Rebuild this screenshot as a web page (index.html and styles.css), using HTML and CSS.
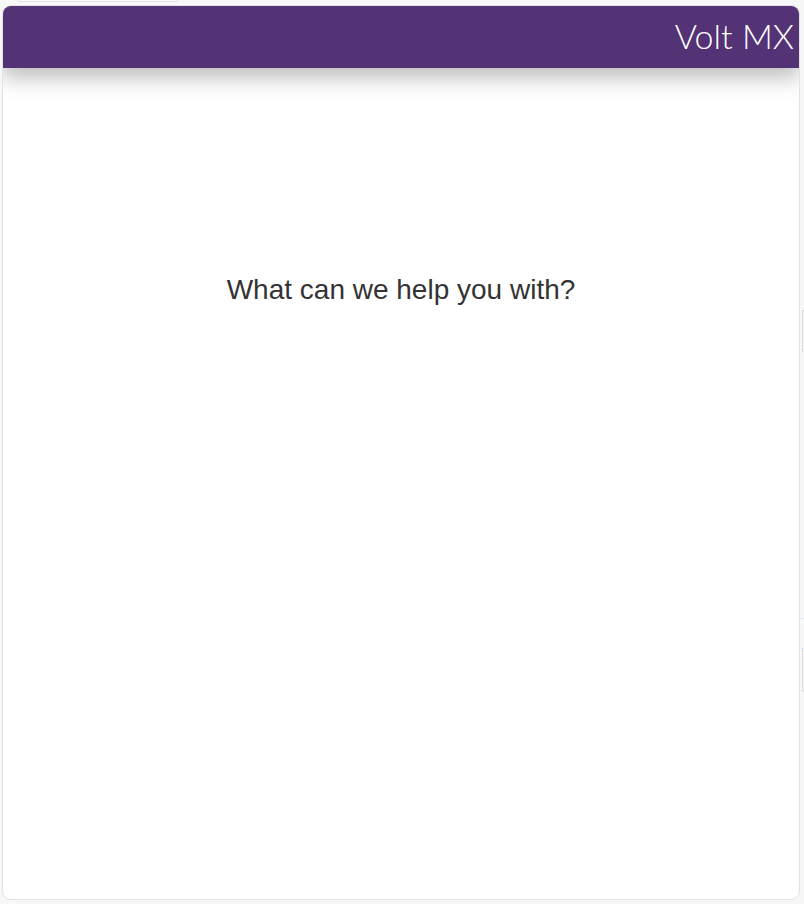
FILE: index.html
```html
<!DOCTYPE html>
<html lang="en">
<head>
<meta charset="utf-8">
<title>Volt MX</title>
<link rel="stylesheet" href="styles.css">
</head>
<body>
<div class="backdrop">
  <div class="tab-edge"></div>
  <div class="side-box side-box-1"></div>
  <div class="side-line side-line-1"></div>
  <div class="side-box side-box-2"></div>
</div>
<div class="card">
  <header class="card-header">
    <span class="brand">Volt MX</span>
  </header>
  <main class="card-body">
    <p class="prompt">What can we help you with?</p>
  </main>
</div>
</body>
</html>
```
FILE: styles.css
```css
html, body {
  margin: 0;
  padding: 0;
  height: 100%;
}
body {
  background: #f7f7f7;
  font-family: "Liberation Sans", Arial, sans-serif;
  overflow: hidden;
}
.backdrop .tab-edge {
  position: absolute;
  left: 17px;
  top: -10px;
  width: 160px;
  height: 10px;
  background: #fafafa;
  border: 1px solid #e2e2e2;
  border-radius: 3px;
}
.backdrop .side-box {
  position: absolute;
  left: 802px;
  width: 10px;
  background: #f2f2f2;
  border: 1px solid #e0e0e0;
}
.side-box-1 { top: 310px; height: 40px; }
.side-box-2 { top: 648px; height: 42px; border-top-color: #d5e2f5 !important; }
.side-line {
  position: absolute;
  left: 801px;
  width: 10px;
  height: 1px;
  background: #d9e4f5;
}
.side-line-1 { top: 618px; }
.card {
  position: relative;
  margin: 5px 4px 0 2px;
  height: 895px;
  box-sizing: border-box;
  background: #fff;
  border: 1px solid #e3e3e3;
  border-radius: 9px;
  display: flex;
  flex-direction: column;
  overflow: hidden;
}
.card-header {
  height: 63px;
  flex: none;
  background: #543276;
  display: flex;
  align-items: center;
  justify-content: flex-end;
  padding-right: 6px;
  box-shadow: 0 10px 20px rgba(0, 0, 0, 0.26);
  position: relative;
  z-index: 1;
  margin: -1px -1px 0 -1px;
}
.brand {
  color: #fff;
  font-family: Lato, "Open Sans", sans-serif;
  font-weight: 300;
  font-size: 34px;
  letter-spacing: 0;
  line-height: 1;
  margin-top: -2px;
}
.card-body {
  flex: 1;
  display: flex;
  justify-content: center;
}
.prompt {
  margin: 206px 0 0 0;
  font-size: 28px;
  color: #333;
  line-height: 32px;
}
```
